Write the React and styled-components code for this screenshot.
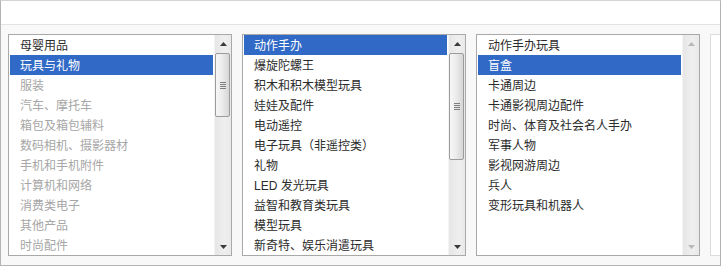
import React from 'react';
import styled, { createGlobalStyle } from 'styled-components';

const GlobalStyle = createGlobalStyle`
  html, body {
    margin: 0;
    padding: 0;
    background: #fff;
  }
  body {
    font-family: "Liberation Sans", "Noto Sans CJK SC", sans-serif;
    font-size: 12px;
  }
`;

const Frame = styled.div`
  width: 721px;
  height: 266px;
  box-sizing: border-box;
  border: 1px solid #b4b4b4;
  border-top-color: #d4d4d4;
  display: flex;
  flex-direction: column;
  overflow: hidden;
  background: #fff;
`;

const Header = styled.div`
  height: 23px;
  flex: none;
  border-bottom: 1px solid #e3e3e3;
  background: #fff;
`;

const Columns = styled.div`
  flex: 1;
  display: flex;
  gap: 10px;
  padding: 9px 0 0 7px;
  background: #f8f8f8;
  overflow: hidden;
`;

const ListBox = styled.div`
  width: 224px;
  height: 222px;
  flex: none;
  box-sizing: border-box;
  border: 1px solid ${(p) => (p.$ghost ? '#dcdcdc' : '#a9a9a9')};
  background: #fff;
  display: flex;
`;

const Options = styled.ul`
  flex: 1;
  margin: 0;
  padding: 0 1px;
  list-style: none;
  overflow: hidden;
`;

const Option = styled.li`
  height: 20px;
  box-sizing: border-box;
  padding: 2px 0 0 10px;
  line-height: 18px;
  white-space: nowrap;
  color: ${(p) => (p.$selected ? '#fff' : p.$muted ? '#a6a6a6' : '#2b2b2b')};
  background: ${(p) => (p.$selected ? '#3169c6' : 'transparent')};
`;

const Scrollbar = styled.div`
  width: 17px;
  flex: none;
  display: flex;
  flex-direction: column;
  background: linear-gradient(to right, #e6e6e6, #efefef 60%, #e9e9e9);
  border-left: 1px solid #f4f4f4;
  box-sizing: border-box;
`;

const Arrow = styled.div`
  height: 17px;
  flex: none;
  display: flex;
  align-items: center;
  justify-content: center;
  svg {
    display: block;
  }
`;

const Track = styled.div`
  flex: 1;
  display: flex;
  flex-direction: column;
`;

const Thumb = styled.div`
  height: ${(p) => p.$size}px;
  margin: 1px 1px 0 0;
  box-sizing: border-box;
  border: 1px solid #9c9c9c;
  border-radius: 2px;
  background: linear-gradient(to right, #f7f7f7, #ececec 45%, #d6d6d6);
  display: flex;
  align-items: center;
  justify-content: center;
`;

const Grip = styled.div`
  width: 6px;
  height: 7px;
  background: repeating-linear-gradient(
    to bottom,
    #7d7d7d 0,
    #7d7d7d 1px,
    transparent 1px,
    transparent 2px
  );
`;

function Triangle({ down, disabled }) {
  const fill = disabled ? '#b8b8b8' : '#3a3a3a';
  return (
    <svg width="7" height="4" viewBox="0 0 7 4">
      {down ? (
        <polygon points="0,0 7,0 3.5,4" fill={fill} />
      ) : (
        <polygon points="3.5,0 7,4 0,4" fill={fill} />
      )}
    </svg>
  );
}

function Bar({ thumb }) {
  const disabled = !thumb;
  return (
    <Scrollbar>
      <Arrow>
        <Triangle disabled={disabled} />
      </Arrow>
      <Track>
        {thumb ? (
          <Thumb $size={thumb}>
            <Grip />
          </Thumb>
        ) : null}
      </Track>
      <Arrow>
        <Triangle down disabled={disabled} />
      </Arrow>
    </Scrollbar>
  );
}

const columns = [
  {
    thumb: 64,
    selected: 1,
    items: [
      '母婴用品',
      '玩具与礼物',
      '服装',
      '汽车、摩托车',
      '箱包及箱包辅料',
      '数码相机、摄影器材',
      '手机和手机附件',
      '计算机和网络',
      '消费类电子',
      '其他产品',
      '时尚配件',
    ],
    muted: (i) => i > 1,
  },
  {
    thumb: 107,
    selected: 0,
    items: [
      '动作手办',
      '爆旋陀螺王',
      '积木和积木模型玩具',
      '娃娃及配件',
      '电动遥控',
      '电子玩具（非遥控类）',
      '礼物',
      'LED 发光玩具',
      '益智和教育类玩具',
      '模型玩具',
      '新奇特、娱乐消遣玩具',
    ],
  },
  {
    thumb: 0,
    selected: 1,
    items: [
      '动作手办玩具',
      '盲盒',
      '卡通周边',
      '卡通影视周边配件',
      '时尚、体育及社会名人手办',
      '军事人物',
      '影视网游周边',
      '兵人',
      '变形玩具和机器人',
    ],
  },
];

export default function App() {
  return (
    <>
      <GlobalStyle />
      <Frame>
        <Header />
        <Columns>
          {columns.map((col, c) => (
            <ListBox key={c}>
              <Options>
                {col.items.map((item, i) => (
                  <Option
                    key={item}
                    $selected={i === col.selected}
                    $muted={col.muted ? col.muted(i) : false}
                  >
                    {item}
                  </Option>
                ))}
              </Options>
              <Bar thumb={col.thumb} />
            </ListBox>
          ))}
          <ListBox $ghost />
        </Columns>
      </Frame>
    </>
  );
}
